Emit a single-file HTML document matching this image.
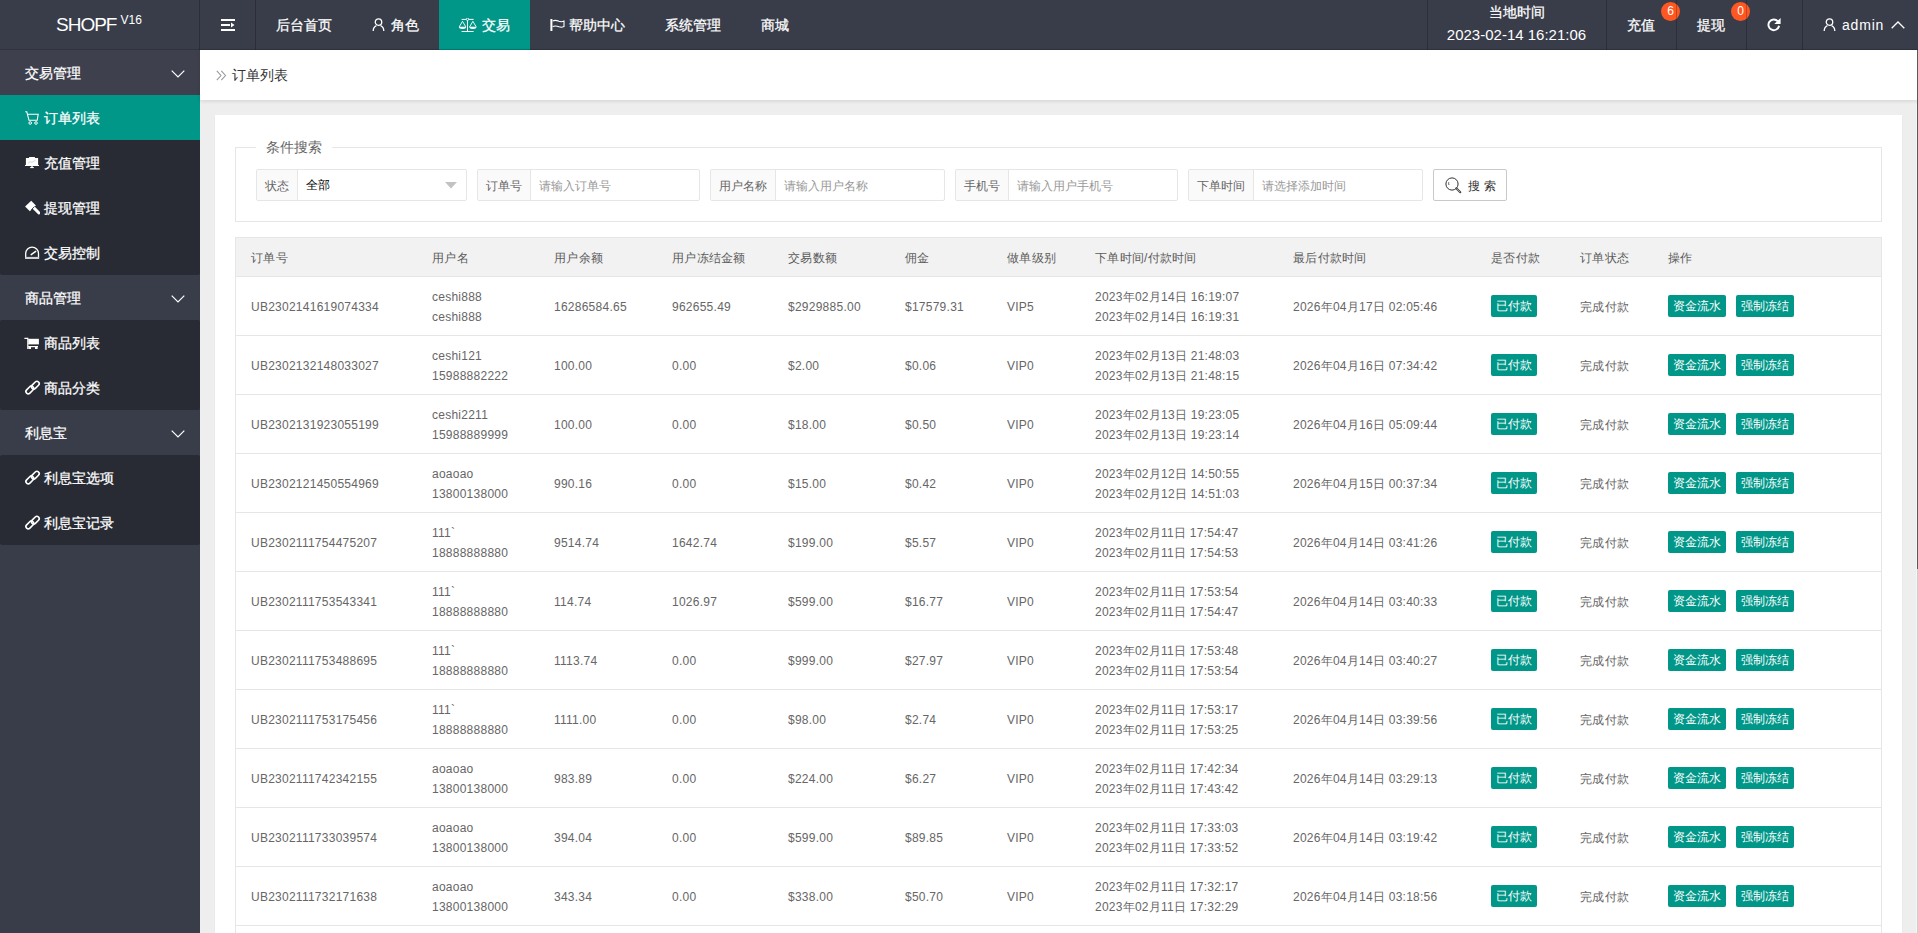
<!DOCTYPE html>
<html><head><meta charset="utf-8"><title>订单列表</title><style>
*{box-sizing:border-box;margin:0;padding:0}
html,body{width:1918px;height:933px;overflow:hidden}
body{position:relative;font-family:"Liberation Sans",sans-serif;font-size:14px;color:#333;background:#eeeeee}
.abs{position:absolute}
.hdr{position:absolute;left:0;top:0;width:1918px;height:50px;background:#393D49;color:#fff}
.hdr .bl{position:absolute;left:0;top:49px;width:1918px;height:1px;background:rgba(0,0,0,.16)}
.sep{position:absolute;top:0;width:1px;height:50px;background:rgba(0,0,0,.22)}
.logo{position:absolute;left:56px;top:13px;font-size:19px;letter-spacing:-1px;color:#fff;white-space:nowrap;line-height:24px}
.logo sup{font-size:12px;position:relative;top:1px;margin-left:4px;letter-spacing:0;vertical-align:top;line-height:12px}
.nav{position:absolute;top:0;height:50px;line-height:50px;font-size:14px;color:#fff;white-space:nowrap}
.nav svg{position:absolute}
.side{position:absolute;left:0;top:50px;width:200px;height:883px;background:#393D49}
.pi{position:absolute;left:0;width:200px;height:45px;line-height:47px;padding-left:25px;color:#fff;font-size:14px}
.pi svg{position:absolute;left:171px;top:20px}
.ch{position:absolute;left:0;width:200px;background:#282B33;border-radius:2px}
.ci{position:absolute;left:0;width:200px;height:45px;line-height:47px;padding-left:44px;color:#fff;font-size:14px}
.ci svg{position:absolute;left:25px}
.ci.on{background:#009688}
.crumb{position:absolute;left:200px;top:50px;width:1717px;height:50px;background:#fff;box-shadow:0 1px 4px rgba(0,0,0,.12)}
.rline{position:absolute;left:1917px;top:50px;width:1px;height:519px;background:#5a5a5a}
.rl3{position:absolute;left:1917px;top:569px;width:1px;height:364px;background:#cdcdcd}
.rl2{position:absolute;left:1916px;top:104px;width:1px;height:829px;background:#f6f6f6}
.card{position:absolute;left:215px;top:115px;width:1687px;height:900px;background:#fff;box-shadow:0 1px 2px rgba(0,0,0,.05)}
.fs{position:absolute;left:235px;top:147px;width:1647px;height:75px;border:1px solid #e6e6e6}
.legend{position:absolute;left:256px;top:138px;padding:0 10px;background:#fff;font-size:14px;color:#666;line-height:18px}
.ig{position:absolute;top:169px;height:32px;border:1px solid #e6e6e6;border-radius:2px;font-size:12px;line-height:30px;white-space:nowrap}
.ig .lb{position:absolute;left:0;top:0;height:30px;padding:1px 8px 0 8px;background:#FAFAFA;border-right:1px solid #e6e6e6;color:#666;border-radius:2px 0 0 2px}
.ig .ph{position:absolute;top:1px;color:#999}
.sbtn{position:absolute;left:1433px;top:169px;width:74px;height:32px;border:1px solid #C9C9C9;border-radius:2px;background:#fff;font-size:12px;color:#555;line-height:30px}
.tw{position:absolute;left:235px;top:237px;width:1647px;height:720px;border:1px solid #e6e6e6;border-bottom:0;overflow:hidden}
.tbl{width:1645px;border-collapse:separate;border-spacing:0;table-layout:fixed;font-size:12px;color:#666}
.tbl th{background:#F2F2F2;font-weight:normal;text-align:left;height:39px;padding:1px 15px 0;line-height:20px;border-bottom:1px solid #e6e6e6;color:#5c5c5c;letter-spacing:.25px}
.tbl td{height:59px;padding:10px 15px 8px;line-height:20px;border-bottom:1px solid #e6e6e6;white-space:nowrap;overflow:hidden;letter-spacing:.25px}
.badge{position:relative;top:-1px;letter-spacing:0;display:inline-block;height:22px;line-height:22px;padding:0 5px;background:#009688;color:#fff;border-radius:2px;font-size:12px}
.btn{position:relative;top:-1px;letter-spacing:0;display:inline-block;height:22px;line-height:22px;padding:0 5px;background:#009688;color:#fff;border-radius:2px;font-size:12px}
.btn.b2{margin-left:10px}
.dot{position:absolute;width:19px;height:19px;border-radius:50%;background:#FF5722;color:#fff;font-size:12px;line-height:19px;text-align:center}
.nav,.pi,.ci,.hw{-webkit-text-stroke:.25px #fff}

</style></head><body>
<div class="hdr">
  <div class="logo">SHOPF<sup>V16</sup></div>
  <div class="sep" style="left:199px"></div>
  <svg class="abs" style="left:221px;top:19px" width="14" height="12" viewBox="0 0 14 12"><rect x="0" y="0" width="14" height="2" fill="#fff"/><rect x="0" y="5" width="9" height="2" fill="#fff"/><path d="M10 3.5 L13.5 6 L10 8.5Z" fill="#fff"/><rect x="0" y="10" width="14" height="2" fill="#fff"/></svg>
  <div class="sep" style="left:255px"></div>
  <div class="nav" style="left:276px">后台首页</div>
  <svg class="abs" style="left:372px;top:17px" width="13" height="15" viewBox="0 0 13 15"><circle cx="6.5" cy="5.1" r="3.25" fill="none" stroke="#fff" stroke-width="1.3"/><path d="M1.2 14 C1.3 11 2.6 9.3 4.4 8.6 M11.8 14 C11.7 11 10.4 9.3 8.6 8.6" fill="none" stroke="#fff" stroke-width="1.3"/></svg>
  <div class="nav" style="left:391px">角色</div>
  <div class="abs" style="left:439px;top:0;width:91px;height:50px;background:#009688"></div>
  <svg class="abs" style="left:458px;top:18px" width="20" height="15" viewBox="0 0 20 15"><g fill="none" stroke="#fff" stroke-width="1"><line x1="3.6" y1="1.4" x2="15.6" y2="1.4"/><line x1="9.5" y1="2.2" x2="9.5" y2="13.5"/><line x1="3.6" y1="13.5" x2="15.6" y2="13.5"/><path d="M4.5 3.3 L1.2 8.9 M4.5 3.3 L7.8 8.9 M14.9 3.3 L11.6 8.9 M14.9 3.3 L18.2 8.9" stroke-width=".9"/></g><circle cx="9.5" cy="1.3" r="1.2" fill="#009688" stroke="#fff" stroke-width=".9"/><path d="M0.9 8.7 H8.1 A3.6 2.2 0 0 1 0.9 8.7Z M11.3 8.7 H18.5 A3.6 2.2 0 0 1 11.3 8.7Z" fill="#fff"/></svg>
  <div class="nav" style="left:482px">交易</div>
  <svg class="abs" style="left:550px;top:18px" width="15" height="14" viewBox="0 0 15 14"><rect x="0.4" y="1" width="2" height="12" fill="#fff"/><path d="M2.6 2.9 C5 1.9 7 2.4 9 3.3 C11 4.1 12.4 3.8 14 3.1 V8.6 C12.4 9.3 11 9.6 9 8.8 C7 7.9 5 7.5 2.6 8.6" fill="none" stroke="#fff" stroke-width="1.1"/></svg>
  <div class="nav" style="left:569px">帮助中心</div>
  <div class="nav" style="left:665px">系统管理</div>
  <div class="nav" style="left:761px">商城</div>

  <div class="sep" style="left:1427px"></div>
  <div class="abs hw" style="left:1427px;top:3px;width:179px;text-align:center;font-size:14px;line-height:18px;color:#fff">当地时间</div>
  <div class="abs" style="left:1427px;top:25px;width:179px;text-align:center;font-size:15px;line-height:20px;color:#fff">2023-02-14 16:21:06</div>
  <div class="sep" style="left:1606px"></div>
  <div class="nav" style="left:1627px">充值</div>
  <div class="dot" style="left:1661px;top:2px">6</div>
  <div class="sep" style="left:1676px"></div>
  <div class="nav" style="left:1697px">提现</div>
  <div class="dot" style="left:1731px;top:2px">0</div>
  <div class="sep" style="left:1746px"></div>
  <svg class="abs" style="left:1766px;top:17px" width="16" height="16" viewBox="0 0 16 16"><path d="M13.07 8.73 A5.35 5.35 0 1 1 11.9 4.36" fill="none" stroke="#fff" stroke-width="1.9"/><path d="M14.6 1 V6.9 H8.3 Z" fill="#fff"/></svg>
  <div class="sep" style="left:1802px"></div>
  <svg class="abs" style="left:1823px;top:17px" width="13" height="15" viewBox="0 0 13 15"><circle cx="6.5" cy="5.1" r="3.25" fill="none" stroke="#fff" stroke-width="1.3"/><path d="M1.2 14 C1.3 11 2.6 9.3 4.4 8.6 M11.8 14 C11.7 11 10.4 9.3 8.6 8.6" fill="none" stroke="#fff" stroke-width="1.3"/></svg>
  <div class="nav" style="left:1842px;letter-spacing:.8px;-webkit-text-stroke:0">admin</div>
  <svg class="abs" style="left:1891px;top:21px" width="14" height="8" viewBox="0 0 14 8"><path d="M0.7 7.3 L7 1 L13.3 7.3" fill="none" stroke="#fff" stroke-width="1.3"/></svg>
  <div class="bl"></div>
</div>

<div class="side">
  <div class="pi" style="top:0;background:#3E414D">交易管理<svg width="14" height="8" viewBox="0 0 14 8"><path d="M0.7 0.7 L7 7 L13.3 0.7" fill="none" stroke="#fff" stroke-width="1.2"/></svg></div>
  <div class="ch" style="top:45px;height:180px">
    <div class="ci on" style="top:0"><svg style="top:16px" width="14" height="14" viewBox="0 0 14 14"><g fill="none" stroke="#fff" stroke-width="1.1"><path d="M0.3 0.8 H1.8 L4 9.3 H12.2 L13.2 3.3 H3"/></g><circle cx="5.2" cy="12" r="1.3" fill="none" stroke="#fff" stroke-width="1"/><circle cx="11" cy="12" r="1.3" fill="none" stroke="#fff" stroke-width="1"/></svg>订单列表</div>
    <div class="ci" style="top:45px"><svg style="top:17px" width="14" height="12" viewBox="0 0 14 12"><rect x="4.1" y="0" width="5.8" height="1.3" fill="#fff"/><rect x="0.9" y="1" width="12.2" height="7.5" fill="#fff"/><path d="M3 6.2 L5 4.8 L7 5.4 L10.8 3" fill="none" stroke="#bbb" stroke-width=".6"/><rect x="0" y="8" width="14" height="1" fill="#fff"/><rect x="6.3" y="9" width="1.4" height="1.2" fill="#fff"/><rect x="5.2" y="10" width="3.6" height="1.1" fill="#fff"/></svg>充值管理</div>
    <div class="ci" style="top:90px"><svg style="top:15px" width="15" height="15" viewBox="0 0 15 15"><path d="M6.2 0.7 L10.9 5.4 L4.8 11.3 L0.1 6.6 Z" fill="#fff"/><path d="M8.6 7.6 L14 13" stroke="#fff" stroke-width="3" stroke-linecap="round"/><path d="M6.3 9.8 L9.6 6.5" stroke="#282B33" stroke-width=".9"/></svg>提现管理</div>
    <div class="ci" style="top:135px"><svg style="top:16px" width="15" height="14" viewBox="0 0 15 14"><path d="M0.7 11.2 V7.5 A6.4 6.4 0 0 1 13.5 7.5 V11.2" fill="none" stroke="#fff" stroke-width="1.3"/><rect x="0" y="10.9" width="14.2" height="2.1" fill="#d0d0d6"/><path d="M6.2 8.6 L10.7 5.4" stroke="#fff" stroke-width="1.5" stroke-linecap="round"/></svg>交易控制</div>
  </div>
  <div class="pi" style="top:225px">商品管理<svg width="14" height="8" viewBox="0 0 14 8"><path d="M0.7 0.7 L7 7 L13.3 0.7" fill="none" stroke="#fff" stroke-width="1.2"/></svg></div>
  <div class="ch" style="top:270px;height:90px">
    <div class="ci" style="top:0"><svg style="top:17px;left:24px" width="15" height="13" viewBox="0 0 15 13"><path d="M0.4 1.3 H3.8 V12" fill="none" stroke="#fff" stroke-width="1.2"/><rect x="4.2" y="1.8" width="10.7" height="5.6" fill="#fff"/><rect x="4.2" y="9" width="9.8" height="1.2" fill="#fff"/><rect x="4.4" y="9" width="2.6" height="3" fill="#fff"/><rect x="11" y="9" width="2.6" height="3" fill="#fff"/></svg>商品列表</div>
    <div class="ci" style="top:45px"><svg style="top:14px;left:23.5px;overflow:visible" width="17" height="17" viewBox="0 0 17 17"><g transform="rotate(-45 8.5 8.5)" fill="none" stroke="#fff" stroke-width="1.6"><rect x="0.4" y="6" width="9" height="4.6" rx="2.3"/><rect x="7.6" y="6.6" width="9" height="4.6" rx="2.3"/></g></svg>商品分类</div>
  </div>
  <div class="pi" style="top:360px">利息宝<svg width="14" height="8" viewBox="0 0 14 8"><path d="M0.7 0.7 L7 7 L13.3 0.7" fill="none" stroke="#fff" stroke-width="1.2"/></svg></div>
  <div class="ch" style="top:405px;height:90px">
    <div class="ci" style="top:0"><svg style="top:14px;left:23.5px;overflow:visible" width="17" height="17" viewBox="0 0 17 17"><g transform="rotate(-45 8.5 8.5)" fill="none" stroke="#fff" stroke-width="1.6"><rect x="0.4" y="6" width="9" height="4.6" rx="2.3"/><rect x="7.6" y="6.6" width="9" height="4.6" rx="2.3"/></g></svg>利息宝选项</div>
    <div class="ci" style="top:45px"><svg style="top:14px;left:23.5px;overflow:visible" width="17" height="17" viewBox="0 0 17 17"><g transform="rotate(-45 8.5 8.5)" fill="none" stroke="#fff" stroke-width="1.6"><rect x="0.4" y="6" width="9" height="4.6" rx="2.3"/><rect x="7.6" y="6.6" width="9" height="4.6" rx="2.3"/></g></svg>利息宝记录</div>
  </div>
</div>

<div class="crumb">
  <svg class="abs" style="left:16px;top:20px" width="11" height="11" viewBox="0 0 11 11"><path d="M0.8 0.8 L5 5.5 L0.8 10.2 M5.3 0.8 L9.5 5.5 L5.3 10.2" fill="none" stroke="#999" stroke-width="1.1"/></svg>
  <div class="abs" style="left:32px;top:16px;font-size:14px;line-height:18px;color:#333">订单列表</div>
</div>
<div class="rline"></div><div class="rl2"></div><div class="rl3"></div>

<div class="card"></div>
<div class="fs"></div>
<div class="legend">条件搜索</div>

<div class="ig" style="left:256px;width:211px"><span class="lb">状态</span><span class="abs" style="left:49px;top:0;color:#000">全部</span><svg class="abs" style="left:188px;top:12px" width="12" height="7" viewBox="0 0 12 7"><path d="M0 0 H12 L6 6.5Z" fill="#c2c2c2"/></svg></div>
<div class="ig" style="left:477px;width:223px"><span class="lb">订单号</span><span class="ph" style="left:61px">请输入订单号</span></div>
<div class="ig" style="left:710px;width:235px"><span class="lb">用户名称</span><span class="ph" style="left:73px">请输入用户名称</span></div>
<div class="ig" style="left:955px;width:223px"><span class="lb">手机号</span><span class="ph" style="left:61px">请输入用户手机号</span></div>
<div class="ig" style="left:1188px;width:235px"><span class="lb">下单时间</span><span class="ph" style="left:73px">请选择添加时间</span></div>
<div class="sbtn"><svg class="abs" style="left:11px;top:7px" width="17" height="17" viewBox="0 0 17 17"><circle cx="7" cy="7" r="6.1" fill="none" stroke="#333" stroke-width="1"/><path d="M3.8 5.2 A3.5 3.5 0 0 0 4 8" fill="none" stroke="#333" stroke-width=".8"/><path d="M11.3 11.3 L15.3 15.3" stroke="#444" stroke-width="2" stroke-linecap="round"/><path d="M11.6 11.6 L15 15" stroke="#ddd" stroke-width=".6"/></svg><span class="abs" style="left:34px;top:1px;color:#333">搜</span><span class="abs" style="left:50px;top:1px;color:#333">索</span></div>

<div class="tw"><table class="tbl"><colgroup><col style="width:181px"><col style="width:122px"><col style="width:118px"><col style="width:116px"><col style="width:117px"><col style="width:102px"><col style="width:88px"><col style="width:198px"><col style="width:198px"><col style="width:89px"><col style="width:88px"><col style="width:228px"></colgroup><thead><tr><th>订单号</th><th>用户名</th><th>用户余额</th><th>用户冻结金额</th><th>交易数额</th><th>佣金</th><th>做单级别</th><th>下单时间/付款时间</th><th>最后付款时间</th><th>是否付款</th><th>订单状态</th><th>操作</th></tr></thead><tbody><tr><td>UB2302141619074334</td><td>ceshi888<br>ceshi888</td><td>16286584.65</td><td>962655.49</td><td>$2929885.00</td><td>$17579.31</td><td>VIP5</td><td>2023年02月14日 16:19:07<br>2023年02月14日 16:19:31</td><td>2026年04月17日 02:05:46</td><td><span class="badge">已付款</span></td><td>完成付款</td><td><span class="btn">资金流水</span><span class="btn b2">强制冻结</span></td></tr><tr><td>UB2302132148033027</td><td>ceshi121<br>15988882222</td><td>100.00</td><td>0.00</td><td>$2.00</td><td>$0.06</td><td>VIP0</td><td>2023年02月13日 21:48:03<br>2023年02月13日 21:48:15</td><td>2026年04月16日 07:34:42</td><td><span class="badge">已付款</span></td><td>完成付款</td><td><span class="btn">资金流水</span><span class="btn b2">强制冻结</span></td></tr><tr><td>UB2302131923055199</td><td>ceshi2211<br>15988889999</td><td>100.00</td><td>0.00</td><td>$18.00</td><td>$0.50</td><td>VIP0</td><td>2023年02月13日 19:23:05<br>2023年02月13日 19:23:14</td><td>2026年04月16日 05:09:44</td><td><span class="badge">已付款</span></td><td>完成付款</td><td><span class="btn">资金流水</span><span class="btn b2">强制冻结</span></td></tr><tr><td>UB2302121450554969</td><td>aoaoao<br>13800138000</td><td>990.16</td><td>0.00</td><td>$15.00</td><td>$0.42</td><td>VIP0</td><td>2023年02月12日 14:50:55<br>2023年02月12日 14:51:03</td><td>2026年04月15日 00:37:34</td><td><span class="badge">已付款</span></td><td>完成付款</td><td><span class="btn">资金流水</span><span class="btn b2">强制冻结</span></td></tr><tr><td>UB2302111754475207</td><td>111`<br>18888888880</td><td>9514.74</td><td>1642.74</td><td>$199.00</td><td>$5.57</td><td>VIP0</td><td>2023年02月11日 17:54:47<br>2023年02月11日 17:54:53</td><td>2026年04月14日 03:41:26</td><td><span class="badge">已付款</span></td><td>完成付款</td><td><span class="btn">资金流水</span><span class="btn b2">强制冻结</span></td></tr><tr><td>UB2302111753543341</td><td>111`<br>18888888880</td><td>114.74</td><td>1026.97</td><td>$599.00</td><td>$16.77</td><td>VIP0</td><td>2023年02月11日 17:53:54<br>2023年02月11日 17:54:47</td><td>2026年04月14日 03:40:33</td><td><span class="badge">已付款</span></td><td>完成付款</td><td><span class="btn">资金流水</span><span class="btn b2">强制冻结</span></td></tr><tr><td>UB2302111753488695</td><td>111`<br>18888888880</td><td>1113.74</td><td>0.00</td><td>$999.00</td><td>$27.97</td><td>VIP0</td><td>2023年02月11日 17:53:48<br>2023年02月11日 17:53:54</td><td>2026年04月14日 03:40:27</td><td><span class="badge">已付款</span></td><td>完成付款</td><td><span class="btn">资金流水</span><span class="btn b2">强制冻结</span></td></tr><tr><td>UB2302111753175456</td><td>111`<br>18888888880</td><td>1111.00</td><td>0.00</td><td>$98.00</td><td>$2.74</td><td>VIP0</td><td>2023年02月11日 17:53:17<br>2023年02月11日 17:53:25</td><td>2026年04月14日 03:39:56</td><td><span class="badge">已付款</span></td><td>完成付款</td><td><span class="btn">资金流水</span><span class="btn b2">强制冻结</span></td></tr><tr><td>UB2302111742342155</td><td>aoaoao<br>13800138000</td><td>983.89</td><td>0.00</td><td>$224.00</td><td>$6.27</td><td>VIP0</td><td>2023年02月11日 17:42:34<br>2023年02月11日 17:43:42</td><td>2026年04月14日 03:29:13</td><td><span class="badge">已付款</span></td><td>完成付款</td><td><span class="btn">资金流水</span><span class="btn b2">强制冻结</span></td></tr><tr><td>UB2302111733039574</td><td>aoaoao<br>13800138000</td><td>394.04</td><td>0.00</td><td>$599.00</td><td>$89.85</td><td>VIP0</td><td>2023年02月11日 17:33:03<br>2023年02月11日 17:33:52</td><td>2026年04月14日 03:19:42</td><td><span class="badge">已付款</span></td><td>完成付款</td><td><span class="btn">资金流水</span><span class="btn b2">强制冻结</span></td></tr><tr><td>UB2302111732171638</td><td>aoaoao<br>13800138000</td><td>343.34</td><td>0.00</td><td>$338.00</td><td>$50.70</td><td>VIP0</td><td>2023年02月11日 17:32:17<br>2023年02月11日 17:32:29</td><td>2026年04月14日 03:18:56</td><td><span class="badge">已付款</span></td><td>完成付款</td><td><span class="btn">资金流水</span><span class="btn b2">强制冻结</span></td></tr><tr><td colspan="12" style="height:58px"></td></tr></tbody></table></div>

</body></html>
